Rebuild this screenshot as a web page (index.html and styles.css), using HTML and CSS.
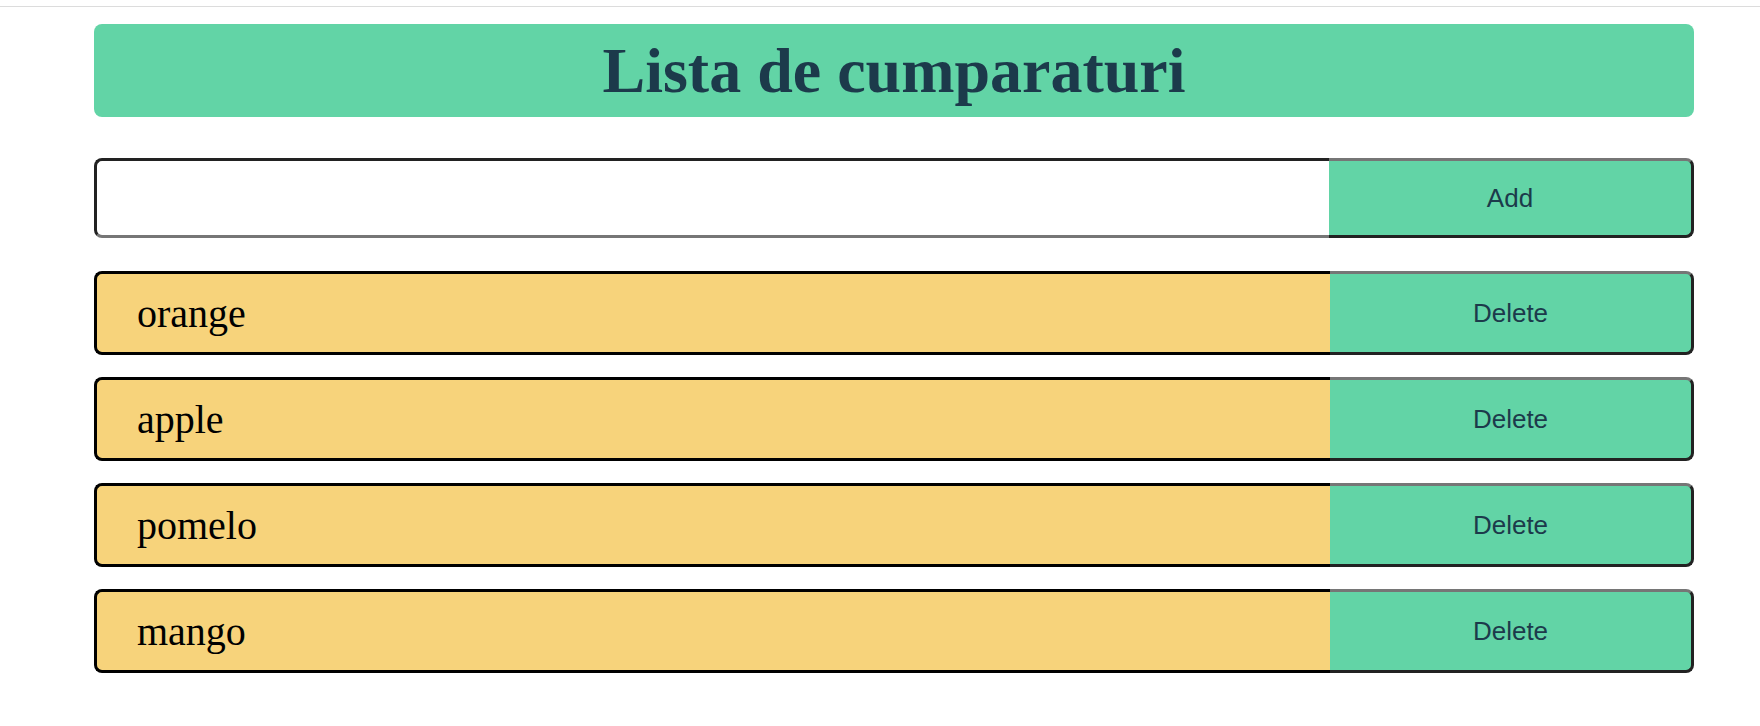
FILE: index.html
```html
<!DOCTYPE html>
<html lang="ro">

<head>
  <meta charset="UTF-8">
  <title>Lista de cumparaturi</title>
  <link rel="stylesheet" href="styles.css">
</head>

<body>

  <div class="topline"></div>

  <div class="container">
    <h1 class="title">Lista de cumparaturi</h1>

    <form class="add-form" id="addForm">
      <input type="text" id="itemInput" class="add-input">
      <button type="submit" class="add-btn">Add</button>
    </form>

    <ul class="list" id="list">
      <li class="item">
        <span class="item-name">orange</span>
        <button type="button" class="delete-btn">Delete</button>
      </li>
      <li class="item">
        <span class="item-name">apple</span>
        <button type="button" class="delete-btn">Delete</button>
      </li>
      <li class="item">
        <span class="item-name">pomelo</span>
        <button type="button" class="delete-btn">Delete</button>
      </li>
      <li class="item">
        <span class="item-name">mango</span>
        <button type="button" class="delete-btn">Delete</button>
      </li>
    </ul>
  </div>

</body>

</html>
```

FILE: styles.css
```css
body {
  margin: 0;
  background: white;
  font-family: "Liberation Serif", "Times New Roman", serif;
}

.topline {
  margin-top: 6px;
  height: 1px;
  background: #dcdcdc;
}

.container {
  width: 1600px;
  margin-left: 94px;
}

.title {
  margin: 17px 0 0;
  padding: 10px 0;
  line-height: 73px;
  font-size: 64px;
  font-weight: bold;
  text-align: center;
  color: #1c3a4b;
  background: #62d4a6;
  border-radius: 8px;
}

.add-form {
  display: flex;
  height: 80px;
  margin-top: 41px;
}

.add-input {
  flex: 1;
  margin: 0;
  padding: 0 20px;
  font-size: 24px;
  background: white;
  border: 3px solid #222;
  border-right: none;
  border-bottom-color: #767676;
  border-radius: 8px 0 0 8px;
  outline: none;
}

.add-btn,
.delete-btn {
  width: 365px;
  margin: 0;
  font-family: "Liberation Sans", Arial, sans-serif;
  font-size: 26px;
  color: #1c3a4b;
  background: #62d4a6;
  border: 3px solid #222;
  border-left: none;
  border-top-color: #767676;
  border-radius: 0 8px 8px 0;
  cursor: pointer;
}

.delete-btn {
  width: 364px;
}

.list {
  list-style: none;
  margin: 33px 0 0;
  padding: 0;
  display: flex;
  flex-direction: column;
  gap: 22px;
}

.item {
  display: flex;
  height: 84px;
}

.item-name {
  flex: 1;
  display: flex;
  align-items: center;
  padding-left: 40px;
  font-size: 40px;
  color: black;
  background: #f7d37b;
  border: 3px solid black;
  border-right: none;
  border-radius: 8px 0 0 8px;
}
```
